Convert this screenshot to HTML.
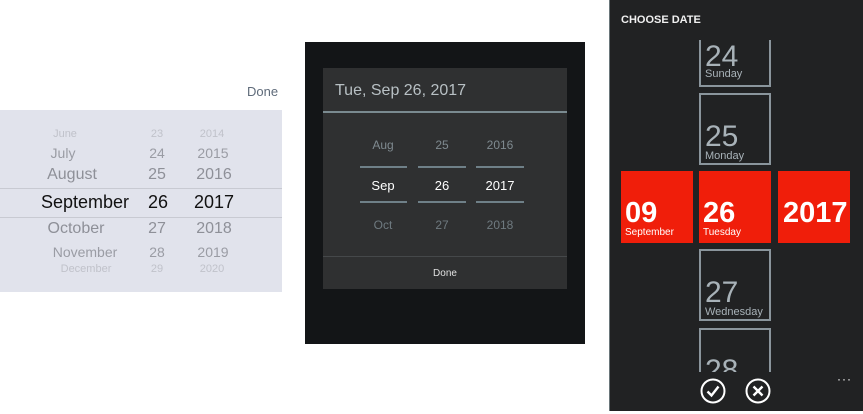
<!DOCTYPE html>
<html><head><meta charset="utf-8"><style>
*{margin:0;padding:0;box-sizing:border-box}
body{width:863px;height:411px;background:#fff;position:relative;overflow:hidden;font-family:"Liberation Sans",sans-serif}
.a{position:absolute;white-space:nowrap}
.c{transform:translateX(-50%);text-align:center}
.tile{position:absolute;border:2px solid #8a959c;width:72px}
.tile .n{position:absolute;left:4px;font-size:30px;color:#a8b2b8}
.tile .d{position:absolute;left:4px;font-size:11px;color:#a8b2b8}
.red{position:absolute;background:#f01e0a;width:72px;height:72px;color:#fff}
.red .n{position:absolute;left:4px;top:26px;font-size:29px;font-weight:bold}
.red .d{position:absolute;left:4px;top:56px;font-size:10px}
</style></head><body>
<!-- panel 1 -->
<div class="a" style="left:247px;top:84px;font-size:13px;color:#5f6b7a">Done</div>
<div class="a" style="left:0;top:110px;width:282px;height:182px;background:#e1e3ec"></div>
<div class="a" style="left:0;top:188px;width:282px;height:1px;background:#c8cad2"></div>
<div class="a" style="left:0;top:217px;width:282px;height:1px;background:#c8cad2"></div>
<div class="a c" style="left:65px;top:128px;font-size:11px;color:#c0c2ca">June</div>
<div class="a c" style="left:157px;top:128px;font-size:11px;color:#c0c2ca">23</div>
<div class="a c" style="left:212px;top:128px;font-size:11px;color:#c0c2ca">2014</div>
<div class="a c" style="left:63px;top:145px;font-size:14px;color:#9a9ca4">July</div>
<div class="a c" style="left:157px;top:145px;font-size:14px;color:#9a9ca4">24</div>
<div class="a c" style="left:213px;top:145px;font-size:14px;color:#9a9ca4">2015</div>
<div class="a c" style="left:72px;top:166px;font-size:16px;color:#8e9098">August</div>
<div class="a c" style="left:157px;top:166px;font-size:16px;color:#8e9098">25</div>
<div class="a c" style="left:214px;top:166px;font-size:16px;color:#8e9098">2016</div>
<div class="a c" style="left:85px;top:192px;font-size:18px;color:#111">September</div>
<div class="a c" style="left:158px;top:192px;font-size:18px;color:#111">26</div>
<div class="a c" style="left:214px;top:192px;font-size:18px;color:#111">2017</div>
<div class="a c" style="left:76px;top:220px;font-size:16px;color:#8e9098">October</div>
<div class="a c" style="left:157px;top:220px;font-size:16px;color:#8e9098">27</div>
<div class="a c" style="left:214px;top:220px;font-size:16px;color:#8e9098">2018</div>
<div class="a c" style="left:85px;top:244px;font-size:14px;color:#9a9ca4">November</div>
<div class="a c" style="left:157px;top:244px;font-size:14px;color:#9a9ca4">28</div>
<div class="a c" style="left:213px;top:244px;font-size:14px;color:#9a9ca4">2019</div>
<div class="a c" style="left:86px;top:263px;font-size:11px;color:#c0c2ca">December</div>
<div class="a c" style="left:157px;top:263px;font-size:11px;color:#c0c2ca">29</div>
<div class="a c" style="left:212px;top:263px;font-size:11px;color:#c0c2ca">2020</div>
<!-- panel 2 -->
<div class="a" style="left:305px;top:42px;width:280px;height:302px;background:#131517"></div>
<div class="a" style="left:323px;top:68px;width:244px;height:221px;background:#2f3031"></div>
<div class="a" style="left:335px;top:82px;font-size:16px;color:#b8c0c4">Tue, Sep 26, 2017</div>
<div class="a" style="left:323px;top:111px;width:244px;height:2px;background:#7a8a90"></div>
<div class="a c" style="left:383px;top:138px;font-size:12px;color:#7f8a90">Aug</div>
<div class="a c" style="left:442px;top:138px;font-size:12px;color:#7f8a90">25</div>
<div class="a c" style="left:500px;top:138px;font-size:12px;color:#7f8a90">2016</div>
<div class="a c" style="left:383px;top:178px;font-size:13px;color:#fff">Sep</div>
<div class="a c" style="left:442px;top:178px;font-size:13px;color:#fff">26</div>
<div class="a c" style="left:500px;top:178px;font-size:13px;color:#fff">2017</div>
<div class="a c" style="left:383px;top:218px;font-size:12px;color:#6f7a80">Oct</div>
<div class="a c" style="left:442px;top:218px;font-size:12px;color:#6f7a80">27</div>
<div class="a c" style="left:500px;top:218px;font-size:12px;color:#6f7a80">2018</div>
<div class="a" style="left:360px;top:166px;width:47px;height:2px;background:#6f8088"></div>
<div class="a" style="left:418px;top:166px;width:48px;height:2px;background:#6f8088"></div>
<div class="a" style="left:476px;top:166px;width:48px;height:2px;background:#6f8088"></div>
<div class="a" style="left:360px;top:201px;width:47px;height:2px;background:#6f8088"></div>
<div class="a" style="left:418px;top:201px;width:48px;height:2px;background:#6f8088"></div>
<div class="a" style="left:476px;top:201px;width:48px;height:2px;background:#6f8088"></div>
<div class="a" style="left:323px;top:256px;width:244px;height:1px;background:#45484a"></div>
<div class="a c" style="left:445px;top:268px;font-size:10px;color:#e0e0e0">Done</div>
<!-- panel 3 -->
<div class="a" style="left:609px;top:0;width:254px;height:411px;background:#212223;border-left:1px solid #6a767a"></div>
<div class="a" style="left:621px;top:14px;font-size:11px;font-weight:bold;color:#f0f0f0">CHOOSE DATE</div>
<div class="tile" style="left:699px;top:40px;height:47px;border-top:none;overflow:hidden"><div class="n" style="top:0px">24</div><div class="d" style="top:28px">Sunday</div></div>
<div class="tile" style="left:699px;top:93px;height:72px"><div class="n" style="top:25px">25</div><div class="d" style="top:55px">Monday</div></div>
<div class="red" style="left:621px;top:171px"><div class="n">09</div><div class="d">September</div></div>
<div class="red" style="left:699px;top:171px"><div class="n">26</div><div class="d">Tuesday</div></div>
<div class="red" style="left:778px;top:171px"><div class="n" style="left:5px">2017</div></div>
<div class="tile" style="left:699px;top:249px;height:72px"><div class="n" style="top:25px">27</div><div class="d" style="top:55px">Wednesday</div></div>
<div class="tile" style="left:699px;top:328px;height:44px;border-bottom:none;overflow:hidden"><div class="n" style="top:24px">28</div></div>
<svg class="a" style="left:690px;top:368px" width="90" height="46">
<circle cx="23" cy="23" r="11.5" fill="none" stroke="#fff" stroke-width="2"/>
<path d="M17.5 23.5 L21.5 27.5 L28.5 18.5" fill="none" stroke="#fff" stroke-width="2.4"/>
<circle cx="68" cy="23" r="11.5" fill="none" stroke="#fff" stroke-width="2"/>
<path d="M63.5 18.5 L72.5 27.5 M72.5 18.5 L63.5 27.5" fill="none" stroke="#fff" stroke-width="2.4"/>
</svg>
<div class="a" style="left:837px;top:372px;font-size:12px;color:#fff;letter-spacing:1px">···</div>
</body></html>
